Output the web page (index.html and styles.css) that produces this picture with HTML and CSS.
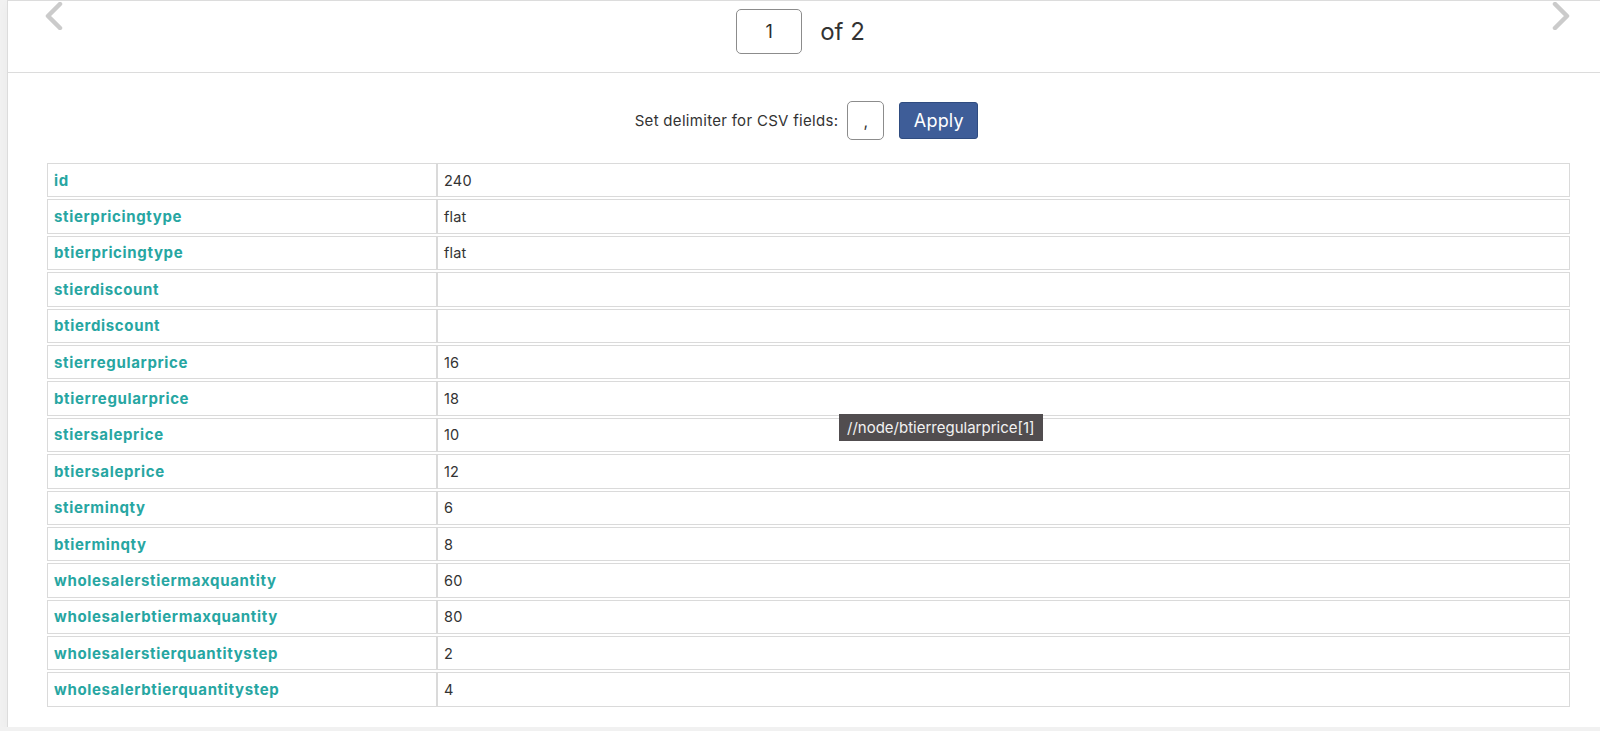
FILE: index.html
```html
<!DOCTYPE html>
<html lang="en">
  <head>
    <meta charset="UTF-8" />
    <meta name="viewport" content="width=device-width, initial-scale=1.0" />
    <title>Record preview</title>
    <link rel="stylesheet" href="styles.css">
  </head>
  <body>
    <div class="panel">
      <div class="pager">
        <a href="#" class="pager-arrow">
          <svg width="18" height="28" viewBox="0 0 18 28"><path d="M15 2 L3 14 L15 26" fill="none" stroke="#cbcbcb" stroke-width="4.5" stroke-linecap="round" stroke-linejoin="round"/></svg>
        </a>
        <div class="pager-center">
          <input type="text" class="page-input" value="1" />
          <span class="page-total">of 2</span>
        </div>
        <a href="#" class="pager-arrow">
          <svg width="18" height="28" viewBox="0 0 18 28"><path d="M3 2 L15 14 L3 26" fill="none" stroke="#cbcbcb" stroke-width="4.5" stroke-linecap="round" stroke-linejoin="round"/></svg>
        </a>
      </div>

      <div class="content">
        <div class="delimiter-form">
          <label for="delimiter">Set delimiter for CSV fields:</label>
          <input type="text" id="delimiter" class="delimiter-input" value="," />
          <button class="apply-btn">Apply</button>
        </div>

        <div class="table-wrap">
          <table class="record-table">
            <tr><td class="field">id</td><td>240</td></tr>
            <tr><td class="field">stierpricingtype</td><td>flat</td></tr>
            <tr><td class="field">btierpricingtype</td><td>flat</td></tr>
            <tr><td class="field">stierdiscount</td><td></td></tr>
            <tr><td class="field">btierdiscount</td><td></td></tr>
            <tr><td class="field">stierregularprice</td><td>16</td></tr>
            <tr><td class="field">btierregularprice</td><td>18</td></tr>
            <tr><td class="field">stiersaleprice</td><td>10</td></tr>
            <tr><td class="field">btiersaleprice</td><td>12</td></tr>
            <tr><td class="field">stierminqty</td><td>6</td></tr>
            <tr><td class="field">btierminqty</td><td>8</td></tr>
            <tr><td class="field">wholesalerstiermaxquantity</td><td>60</td></tr>
            <tr><td class="field">wholesalerbtiermaxquantity</td><td>80</td></tr>
            <tr><td class="field">wholesalerstierquantitystep</td><td>2</td></tr>
            <tr><td class="field">wholesalerbtierquantitystep</td><td>4</td></tr>
          </table>
          <div class="xpath-tip">//node/btierregularprice[1]</div>
        </div>
      </div>
    </div>
  </body>
</html>
```

FILE: styles.css
```css
body {
  font-family: Inter, "Noto Sans", sans-serif;
  background-color: #f1f1f1;
  margin: 0;
  padding: 0;
  overflow: hidden;
}

.panel {
  margin: 0 -9px 0 7px;
  background-color: #fff;
  border: 1px solid #dcdcdc;
  border-right: none;
  border-bottom: none;
  box-shadow: 0 4px 10px rgba(0, 0, 0, 0.03);
}

.pager {
  height: 71px;
  border-bottom: 1px solid #dcdcdc;
  display: flex;
  justify-content: space-between;
  align-items: flex-start;
  padding: 0 39px 0 37px;
}

.pager-arrow {
  display: block;
  padding-top: 1px;
}

.pager-center {
  display: flex;
  align-items: center;
  gap: 18px;
  margin-top: 8px;
  margin-right: 14px;
}

.page-input {
  width: 66px;
  height: 45px;
  box-sizing: border-box;
  border: 1px solid #8c8c8c;
  border-radius: 5px;
  text-align: center;
  font-family: inherit;
  font-size: 18px;
  color: #2c2c2c;
}

.page-total {
  font-size: 24px;
  color: #333;
}

.content {
  padding: 28px 39px 18px 39px;
}

.delimiter-form {
  display: flex;
  justify-content: center;
  align-items: center;
  margin-bottom: 23px;
  margin-right: 4px;
  font-size: 15px;
  letter-spacing: 0.3px;
  color: #333;
}

.delimiter-input {
  width: 37px;
  height: 39px;
  box-sizing: border-box;
  margin-left: 9px;
  border: 1px solid #8c8c8c;
  border-radius: 5px;
  text-align: center;
  font-family: inherit;
  font-size: 16px;
  color: #333;
}

.apply-btn {
  margin-left: 15px;
  width: 79px;
  height: 37px;
  background-color: #3e5d98;
  border: 1px solid #2f4c80;
  border-radius: 3px;
  color: #fff;
  font-family: inherit;
  font-size: 18px;
  letter-spacing: 0.2px;
  cursor: pointer;
}

.table-wrap {
  position: relative;
}

.record-table {
  width: 100%;
  border-collapse: separate;
  border-spacing: 0 2px;
  margin-top: -2px;
  font-size: 14.5px;
  letter-spacing: 0.2px;
  color: #333;
}

.record-table td {
  height: 32.4px;
  padding: 0 6px;
  border: 1px solid #dadada;
}

.record-table td.field {
  width: 376px;
  color: #27a6a2;
  font-size: 15px;
  font-weight: bold;
  letter-spacing: 0.65px;
}

.xpath-tip {
  position: absolute;
  left: 792px;
  top: 253px;
  padding: 0 8px;
  height: 27px;
  line-height: 27px;
  background-color: #514d4f;
  color: #f2f2f2;
  font-size: 15px;
}
```
